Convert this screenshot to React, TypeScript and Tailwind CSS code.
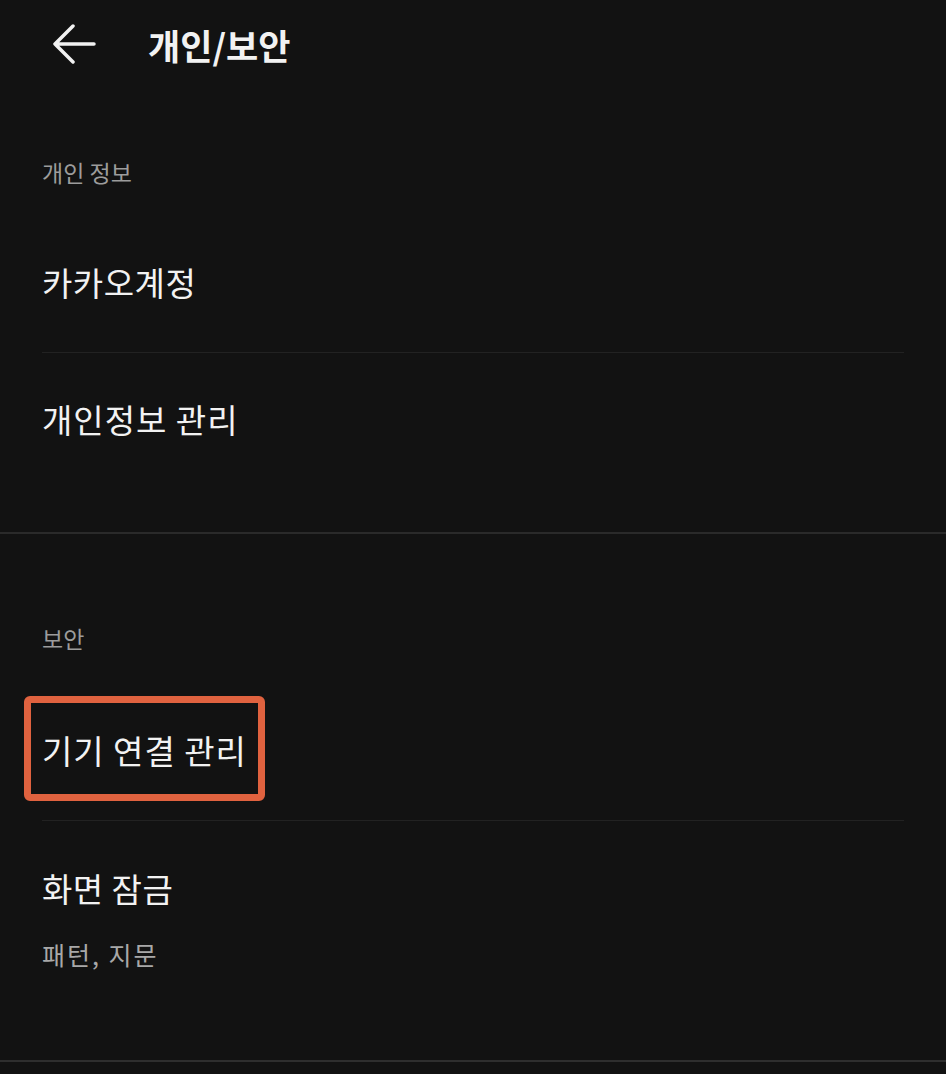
import React from "react";

const font = { fontFamily: '"Noto Sans CJK KR", "Noto Sans", sans-serif' };

function Label({ text, top }: { text: string; top: string }) {
  return (
    <div className={`${top} px-[42px] text-[23px] leading-[28px] text-[#9c9c9c]`}>{text}</div>
  );
}

export default function App() {
  return (
    <div className="w-[946px] h-[1074px] bg-[#121212] overflow-hidden" style={font}>
      {/* Header */}
      <div className="h-[88px] flex items-center">
        <svg className="ml-[52px]" width="44" height="40" viewBox="0 0 44 40" fill="none">
          <path d="M42 20H3M21 2L3 20l18 18" stroke="#f2f2f2" strokeWidth="3.5" strokeLinecap="round" strokeLinejoin="round" />
        </svg>
        <div className="ml-[52px] text-[35px] font-bold text-[#f2f2f2] leading-none">개인/보안</div>
      </div>

      {/* Section 1 */}
      <Label text="개인 정보" top="pt-[70px]" />
      <div className="mt-[28px] h-[138px] flex items-center px-[42px] text-[33px] tracking-[0.5px] text-[#f2f2f2]">카카오계정</div>
      <div className="mx-[42px] h-px bg-[#222222]" />
      <div className="h-[134px] flex items-center px-[42px] text-[33px] tracking-[1px] text-[#f2f2f2]">개인정보 관리</div>
      <div className="h-[45px]" />
      <div className="h-[2px] bg-[#2a2a2a]" />

      {/* Section 2 */}
      <Label text="보안" top="pt-[90px]" />
      <div className="relative mt-[30px] h-[138px] flex items-center px-[42px] text-[33px] tracking-[1px] text-[#f2f2f2]">
        기기 연결 관리
        <div className="absolute left-[24px] top-[14px] w-[241px] h-[105px] border-[7px] border-[#e0623f] rounded-[6px]" />
      </div>
      <div className="mx-[42px] h-px bg-[#222222]" />
      <div className="px-[42px] pt-[48px]">
        <div className="text-[33px] leading-[38px] tracking-[0.5px] text-[#f2f2f2]">화면 잠금</div>
        <div className="mt-[32px] text-[25px] leading-[30px] tracking-[2px] text-[#a8a8a8]">패턴, 지문</div>
      </div>
      <div className="mt-[91px] h-[2px] bg-[#2e2e2e]" />
    </div>
  );
}
